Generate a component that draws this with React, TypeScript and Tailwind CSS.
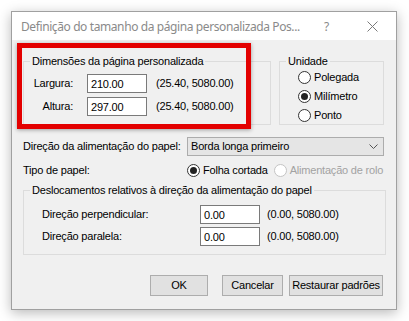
import React from "react"

const ui = { fontFamily: '"Liberation Sans", Arial, sans-serif' }
const title = { fontFamily: '"Noto Sans", "Open Sans", sans-serif' }

function Radio({ checked, disabled, label }: { checked?: boolean; disabled?: boolean; label: string }) {
  return (
    <div className="flex items-center h-[19px] whitespace-nowrap shrink-0">
      <span
        className={
          "w-[13px] h-[13px] shrink-0 rounded-full border bg-white flex items-center justify-center " +
          (disabled ? "border-[#c4c4c4]" : "border-[#333333]")
        }
      >
        {checked && <span className="w-[7px] h-[7px] rounded-full bg-[#222222]" />}
      </span>
      <span className={"ml-[3px] " + (disabled ? "text-[#a2a2a2]" : "text-black")}>{label}</span>
    </div>
  )
}

function Field({ value }: { value: string }) {
  return (
    <div className="w-[60px] h-[19px] bg-white border border-[#7a7a7a] pl-[3px] pt-[2px] flex items-center">
      {value}
    </div>
  )
}

export default function App() {
  return (
    <div
      className="w-[409px] h-[321px] bg-white p-[11px] text-[11px] leading-[13px] tracking-[-0.2px] whitespace-nowrap"
      style={ui}
    >
      <div className="relative w-[386px] h-[299px] border border-[#a0a0a0] bg-[#f0f0f0] shadow-[0_3px_12px_rgba(0,0,0,0.28)] flex flex-col">
        {/* title bar */}
        <div className="h-[28px] bg-white flex items-center pl-[9px] text-[12px] text-[#8a8a8a]" style={title}>
          <span className="tracking-[-0.4px]">Definição do tamanho da página personalizada Pos...</span>
          <span className="ml-auto mr-[38px]">?</span>
          <svg width="11" height="11" viewBox="0 0 11 11" className="mr-[18px]">
            <path d="M0.5 0.5 L10.5 10.5 M10.5 0.5 L0.5 10.5" stroke="#7a7a7a" strokeWidth="1" />
          </svg>
        </div>

        <div className="flex-1 pl-[11px] pr-[12px] pt-[15px]">
          {/* top row */}
          <div className="flex gap-[8px]">
            <fieldset className="w-[248px] h-[70px] border border-[#dcdcdc] px-0 pt-[6px]">
              <legend className="ml-[6px] px-[2px]">Dimensões da página personalizada</legend>
              <div className="flex flex-col gap-[4px]">
                <div className="flex items-center">
                  <span className="w-[49px] text-right">Largura:</span>
                  <div className="ml-[14px]"><Field value="210.00" /></div>
                  <span className="ml-[9px]">(25.40, 5080.00)</span>
                </div>
                <div className="flex items-center">
                  <span className="w-[49px] text-right">Altura:</span>
                  <div className="ml-[14px]"><Field value="297.00" /></div>
                  <span className="ml-[9px]">(25.40, 5080.00)</span>
                </div>
              </div>
            </fieldset>
            <fieldset className="w-[105px] h-[70px] border border-[#dcdcdc] pl-[18px] pt-[0px]">
              <legend className="-ml-[12px] px-[2px]">Unidade</legend>
              <Radio label="Polegada" />
              <Radio label="Milímetro" checked />
              <Radio label="Ponto" />
            </fieldset>
          </div>

          {/* feed direction */}
          <div className="flex items-center mt-[12px]">
            <span className="w-[164px]">Direção da alimentação do papel:</span>
            <div className="w-[197px] h-[19px] bg-[#e5e5e5] border border-[#acacac] flex items-center pl-[3px]">
              <span>Borda longa primeiro</span>
              <svg width="9" height="6" viewBox="0 0 9 6" className="ml-auto mr-[5px]">
                <path d="M0.5 0.5 L4.5 4.5 L8.5 0.5" stroke="#555" fill="none" strokeWidth="1" />
              </svg>
            </div>
          </div>

          {/* paper type */}
          <div className="flex items-center mt-[5px] h-[19px]">
            <span className="w-[164px] shrink-0">Tipo de papel:</span>
            <Radio label="Folha cortada" checked />
            <div className="ml-[6px]"><Radio label="Alimentação de rolo" disabled /></div>
          </div>

          {/* offsets */}
          <fieldset className="w-[363px] h-[71px] border border-[#dcdcdc] mt-[4px] pl-[18px] pt-[8px]">
            <legend className="-ml-[12px] px-[2px]">Deslocamentos relativos à direção da alimentação do papel</legend>
            <div className="flex flex-col gap-[3px]">
              <div className="flex items-center">
                <span className="w-[158px]">Direção perpendicular:</span>
                <Field value="0.00" />
                <span className="ml-[7px]">(0.00, 5080.00)</span>
              </div>
              <div className="flex items-center">
                <span className="w-[158px]">Direção paralela:</span>
                <Field value="0.00" />
                <span className="ml-[7px]">(0.00, 5080.00)</span>
              </div>
            </div>
          </fieldset>

          {/* buttons */}
          <div className="flex justify-end mt-[20px] pr-[1px]">
            <button className="w-[58px] h-[21px] bg-[#e1e1e1] border border-[#adadad]">OK</button>
            <button className="w-[61px] h-[21px] bg-[#e1e1e1] border border-[#adadad] ml-[14px]">Cancelar</button>
            <button className="w-[94px] h-[21px] bg-[#e1e1e1] border border-[#adadad] ml-[6px]">Restaurar padrões</button>
          </div>
        </div>

        {/* red annotation box */}
        <div className="absolute left-[5px] top-[31px] w-[234px] h-[86px] border-[5px] border-[#e30000] shadow-[0_1px_4px_rgba(0,0,0,0.35)]" />
      </div>
    </div>
  )
}
